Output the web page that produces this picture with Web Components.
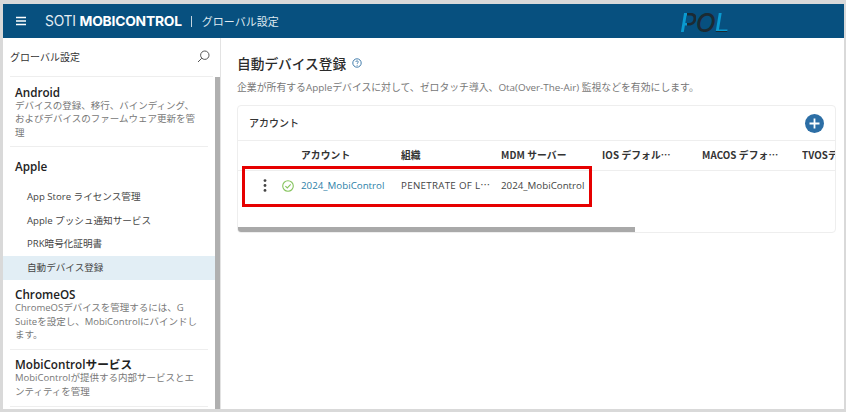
<!DOCTYPE html>
<html lang="ja">
<head>
<meta charset="utf-8">
<title>グローバル設定</title>
<style>
  html, body { margin: 0; padding: 0; background: #fff; }
  body { font-family: "Open Sans", "Noto Sans CJK JP", sans-serif; color: #333; width: 853px; height: 418px; overflow: hidden; }
</style>
</head>
<body>
<app-frame>
  <top-bar slot="top"></top-bar>
  <side-nav slot="side">
    <nav-group title="Android" desc="デバイスの登録、移行、バインディング、およびデバイスのファームウェア更新を管理"></nav-group>
    <nav-group title="Apple" open>
      <nav-item>App Store ライセンス管理</nav-item>
      <nav-item>Apple プッシュ通知サービス</nav-item>
      <nav-item>PRK暗号化証明書</nav-item>
      <nav-item active>自動デバイス登録</nav-item>
    </nav-group>
    <nav-group title="ChromeOS" desc="ChromeOSデバイスを管理するには、G Suiteを設定し、MobiControlにバインドします。"></nav-group>
    <nav-group title="MobiControlサービス" desc="MobiControlが提供する内部サービスとエンティティを管理"></nav-group>
  </side-nav>
  <enroll-page slot="main"></enroll-page>
</app-frame>

<script>
// 外枠: ヘッダー + サイドバー + メイン
class AppFrame extends HTMLElement {
  constructor() {
    super();
    this.attachShadow({ mode: 'open' });
    this.shadowRoot.innerHTML = `
      <style>
        :host { display: block; width: 846px; height: 412px; box-sizing: border-box; border: 3px solid #d9d9d9; border-top-width: 4px; border-right-width: 2px; background: #fff; overflow: hidden; }
        .wrap { display: flex; flex-direction: column; height: 100%; }
        .body { display: flex; flex: 1; min-height: 0; }
        .side { width: 217px; flex: none; border-right: 1px solid #e3e3e3; box-sizing: content-box; }
        .main { flex: 1; min-width: 0; }
      </style>
      <div class="wrap">
        <slot name="top"></slot>
        <div class="body">
          <div class="side"><slot name="side"></slot></div>
          <div class="main"><slot name="main"></slot></div>
        </div>
      </div>`;
  }
}

class TopBar extends HTMLElement {
  constructor() {
    super();
    this.attachShadow({ mode: 'open' });
    this.shadowRoot.innerHTML = `
      <style>
        :host { display: block; height: 34px; background: #07507f; color: #fff; }
        .bar { display: flex; align-items: center; height: 100%; padding-left: 13px; }
        .menu { width: 10px; height: 10px; flex: none; }
        .brand { margin-left: 19px; font: 400 13.8px/34px Inter, "Liberation Sans", sans-serif; letter-spacing: -.2px; white-space: nowrap; color: #e4edf3; }
        .brand b { font-weight: 700; color: #fff; }
        .sep { margin: 0 10px 0 9px; width: 1px; height: 11px; background: #c4d5e0; }
        .title { font: 400 11px/34px "Noto Sans CJK JP", sans-serif; color: #dfe9f0; white-space: nowrap; }
        .logo { position: absolute; left: 680px; top: 8px; font: italic 500 26px/30px Inter, "Liberation Sans", sans-serif; letter-spacing: -1px; color: #0a9ad0; }
        .logo i { color: #1c2a33; font-style: inherit; }
        .logo u { text-decoration: none; -webkit-background-clip: text; background-clip: text; color: transparent; }
        .logo .p { background-image: linear-gradient(90deg, #0a9ad0 46%, #1c2a33 46%); }
        .logo .l { background-image: linear-gradient(#0a9ad0 76%, #1c2a33 76%); }
      </style>
      <div class="bar">
        <svg class="menu" viewBox="0 0 10 10"><path d="M0 1.5h10M0 5h10M0 8.5h10" stroke="#fff" stroke-width="1.3"/></svg>
        <span class="brand">SOTI <b>MOBICONTROL</b></span>
        <span class="sep"></span>
        <span class="title">グローバル設定</span>
      </div>
      <span class="logo"><u class="p">P</u><i>O</i><u class="l">L</u></span>`;
  }
}

class SideNav extends HTMLElement {
  constructor() {
    super();
    this.attachShadow({ mode: 'open' });
    this.shadowRoot.innerHTML = `
      <style>
        :host { display: block; height: 100%; position: relative; overflow: hidden; }
        .search { display: flex; align-items: center; justify-content: space-between; height: 39px; margin: 0 7px; padding-bottom: 1px; box-sizing: border-box; border-bottom: 1px solid #eee; }
        .search span { font: 400 10px/1 "Noto Sans CJK JP", sans-serif; color: #333; }
        .search svg { width: 13px; height: 13px; margin-right: 3px; }
        .list { margin-right: 5px; }
        .thumb { position: absolute; right: 0; top: 39px; bottom: 0; width: 5px; background: #b0b0b0; }
      </style>
      <div class="search">
        <span>グローバル設定</span>
        <svg viewBox="0 0 13 13" fill="none" stroke="#555" stroke-width="1"><circle cx="7.8" cy="5.2" r="4.2"/><path d="M4.8 8.2 1 12"/></svg>
      </div>
      <div class="list"><slot></slot></div>
      <div class="thumb"></div>`;
  }
}

class NavGroup extends HTMLElement {
  constructor() {
    super();
    this.attachShadow({ mode: 'open' });
  }
  connectedCallback() {
    this.shadowRoot.innerHTML = `
      <style>
        :host { display: block; }
        .head { margin: 0 7px; padding: 7.5px 1px 7px 5px; border-bottom: 1px solid #eee; }
        :host([open]) .head { padding: 12px 5px 12px; border-bottom: 0; }
        h3 { margin: 0; font: 600 11.7px/14px "Open Sans", "Noto Sans CJK JP", sans-serif; color: #222; }
        p { margin: 0; max-width: 184px; font: 400 9.5px/13.6px "Open Sans", "Noto Sans CJK JP", sans-serif; color: #777; }
      </style>
      <div class="head">
        <h3>${this.getAttribute('title')}</h3>
        ${this.getAttribute('desc') ? `<p>${this.getAttribute('desc')}</p>` : ''}
      </div>
      <slot></slot>`;
  }
}

class NavItem extends HTMLElement {
  constructor() {
    super();
    this.attachShadow({ mode: 'open' });
    this.shadowRoot.innerHTML = `
      <style>
        :host { display: block; height: 23.6px; padding-left: 24px; font: 400 9.6px/23.6px "Open Sans", "Noto Sans CJK JP", sans-serif; color: #444; white-space: nowrap; }
        :host([active]) { background: #e2eef5; }
      </style>
      <slot></slot>`;
  }
}

class EnrollPage extends HTMLElement {
  constructor() {
    super();
    this.attachShadow({ mode: 'open' });
    this.shadowRoot.innerHTML = `
      <style>
        :host { display: block; padding: 15px 10px 0 16px; }
        .heading { display: flex; align-items: center; gap: 6px; }
        h1 { margin: 0; font: 500 13.7px/20px "Noto Sans CJK JP", sans-serif; color: #2b2b2b; }
        .help { width: 10px; height: 10px; }
        .lead { margin: 7px 0 0; font: 400 9.85px/14px "Open Sans", "Noto Sans CJK JP", sans-serif; color: #777; white-space: nowrap; }
      </style>
      <div class="heading">
        <h1>自動デバイス登録</h1>
        <svg class="help" viewBox="0 0 10 10" fill="none"><circle cx="5" cy="5" r="4.2" stroke="#2f6fa3" stroke-width=".9"/><path d="M3.8 4c0-1.6 2.5-1.6 2.5 0 0 .9-1.2.9-1.2 1.9" stroke="#2f6fa3" stroke-width=".8"/><circle cx="5.1" cy="7.3" r=".5" fill="#2f6fa3"/></svg>
      </div>
      <p class="lead">企業が所有するAppleデバイスに対して、ゼロタッチ導入、Ota(Over-The-Air) 監視などを有効にします。</p>
      <account-card></account-card>`;
  }
}

class AccountCard extends HTMLElement {
  constructor() {
    super();
    this.attachShadow({ mode: 'open' });
    const cols = [
      ['アカウント', 100], ['組織', 100], ['MDM サーバー', 101],
      ['IOS デフォル…', 100], ['MACOS デフォ…', 100], ['TVOSデフォルト', 33]
    ];
    this.shadowRoot.innerHTML = `
      <style>
        :host { display: block; position: relative; margin-top: 11px; width: 599px; height: 128px; box-sizing: border-box; border: 1px solid #eee; border-radius: 4px; overflow: hidden; }
        .title { display: flex; align-items: center; justify-content: space-between; height: 34px; padding: 0 11px 0 11px; border-bottom: 1px solid #eee; }
        .title span { font: 500 10px/1 "Noto Sans CJK JP", sans-serif; color: #333; }
        .add { width: 19px; height: 19px; }
        .row { display: flex; padding-left: 63px; white-space: nowrap; }
        .row > div { flex: none; box-sizing: border-box; overflow: hidden; font-size: 9.75px; }
        .head { height: 29px; line-height: 28px; font-weight: 600; border-bottom: 1px solid #eee; color: #333; font-family: "Noto Sans CJK JP", sans-serif; letter-spacing: .1px; }
        .body { position: relative; height: 30px; line-height: 29px; color: #444; }
        .body a { color: #2d7fa8; text-decoration: none; }
        .org { letter-spacing: .3px; }
        .org span { font-family: "Noto Sans CJK JP", sans-serif; letter-spacing: 0; }
        .more { position: absolute; left: 25px; top: 8px; width: 4px; height: 13px; }
        .ok { position: absolute; left: 44px; top: 9px; width: 12px; height: 12px; }
        .bar { position: absolute; left: 0; bottom: 0; width: 397px; height: 5px; background: #a9a9a9; }
      </style>
      <div class="title">
        <span>アカウント</span>
        <svg class="add" viewBox="0 0 19 19"><circle cx="9.5" cy="9.5" r="9.5" fill="#2c6ea5"/><path d="M9.5 4.5v10M4.5 9.5h10" stroke="#fff" stroke-width="1.8"/></svg>
      </div>
      <div class="row head">${cols.map(c => `<div style="width:${c[1]}px">${c[0]}</div>`).join('')}</div>
      <div class="row body">
        <svg class="more" viewBox="0 0 4 13" fill="#444"><circle cx="2" cy="1.6" r="1.4"/><circle cx="2" cy="6.5" r="1.4"/><circle cx="2" cy="11.4" r="1.4"/></svg>
        <svg class="ok" viewBox="0 0 12 12" fill="none" stroke="#86c45e"><circle cx="6" cy="6" r="5.3" stroke-width="1.1"/><path d="M3.4 6.1l1.9 1.9 3.4-3.6" stroke-width="1.1"/></svg>
        <div style="width:100px"><a href="#">2024_MobiControl</a></div>
        <div style="width:100px" class="org">PENETRATE OF L<span>…</span></div>
        <div style="width:100px">2024_MobiControl</div>
      </div>
      <div class="bar"></div>
      <red-mark></red-mark>`;
  }
}

// 赤い枠の注釈 (スクリーンショット上の強調)
class RedMark extends HTMLElement {
  constructor() {
    super();
    this.attachShadow({ mode: 'open' });
    this.shadowRoot.innerHTML = `
      <style>
        :host { position: absolute; left: 4px; top: 60px; width: 350px; height: 41px; box-sizing: border-box; border: 3px solid #e60000; }
      </style>`;
  }
}

customElements.define('app-frame', AppFrame);
customElements.define('top-bar', TopBar);
customElements.define('side-nav', SideNav);
customElements.define('nav-group', NavGroup);
customElements.define('nav-item', NavItem);
customElements.define('enroll-page', EnrollPage);
customElements.define('account-card', AccountCard);
customElements.define('red-mark', RedMark);
</script>
</body>
</html>
